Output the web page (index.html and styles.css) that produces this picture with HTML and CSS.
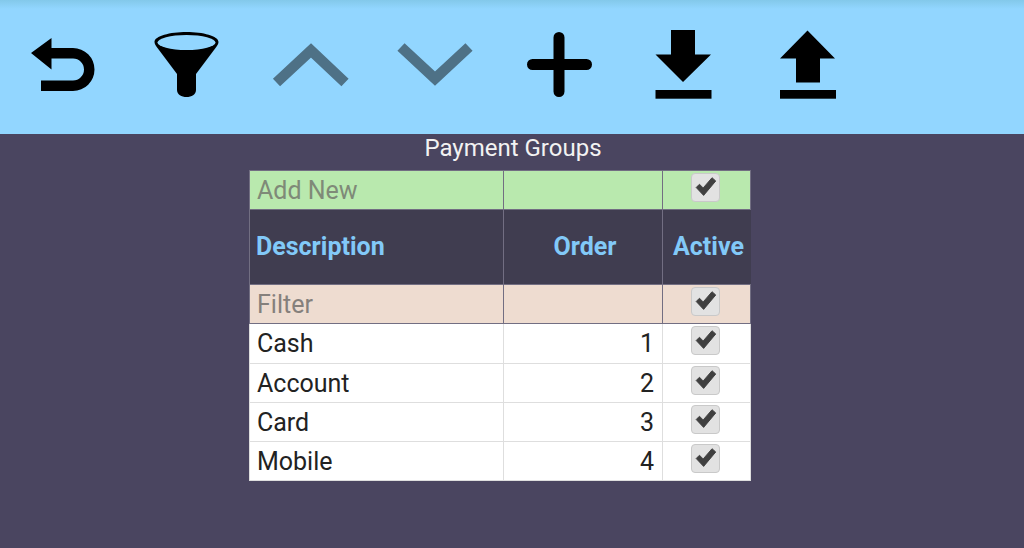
FILE: index.html
```html
<!DOCTYPE html>
<html lang="en">

<head>
    <meta charset="UTF-8">
    <meta name="viewport" content="width=device-width, initial-scale=1.0">
    <title>Payment Groups</title>
    <link rel="stylesheet" href="styles.css">
</head>

<body>
    <svg class="defs" width="0" height="0">
        <symbol id="tick" viewBox="0 0 29 29">
            <path d="M4.5 14.5 L8 11 L12 15 L21.5 4 L25.5 7.5 L12.5 23 Z" />
        </symbol>
    </svg>

    <div class="toolbar">
        <button class="tool">
            <svg viewBox="0 0 124 134" width="124" height="134">
                <path d="M31 53 L51.5 38 V48 H73 A21.5 21.5 0 0 1 73 91 H41 V80.5 H73 A11 11 0 0 0 73 58.5 H51.5 V69.5 Z" />
            </svg>
        </button>
        <button class="tool">
            <svg viewBox="124 0 124 134" width="124" height="134">
                <path d="M154.5 42 C154.5 36 170 32 186.5 32 C203 32 218.5 36 218.5 42 C218.5 44 217 46 215.5 48 L196 74 V90 C196 94.5 191.5 97 186.5 97 C181.5 97 177 94.5 177 90 V74 L157.5 48 C156 46 154.5 44 154.5 42 Z" />
                <ellipse class="hole" cx="186.5" cy="42.5" rx="29" ry="7.5" />
            </svg>
        </button>
        <button class="tool">
            <svg viewBox="248 0 124 134" width="124" height="134">
                <path class="dim" d="M276.5 82.5 L311 50.5 L345 82.5" />
            </svg>
        </button>
        <button class="tool">
            <svg viewBox="372 0 124 134" width="124" height="134">
                <path class="dim" d="M401 47 L435 78.500 L469 47" />
            </svg>
        </button>
        <button class="tool">
            <svg viewBox="496 0 124 134" width="124" height="134">
                <path class="plus" d="M532.500 64.500 H586.500 M559 37.500 V91.500" />
            </svg>
        </button>
        <button class="tool">
            <svg viewBox="620 0 124 134" width="124" height="134">
                <path d="M671 30 H695 V54.500 H711 L683 82 L655.500 54.500 H671 Z" />
                <rect x="655.500" y="90" width="56" height="8.700" />
            </svg>
        </button>
        <button class="tool">
            <svg viewBox="744 0 124 134" width="124" height="134">
                <path d="M807.500 30.500 L835 58.500 H820 V82.500 H796 V58.500 H780 Z" />
                <rect x="780" y="90" width="56" height="8.700" />
            </svg>
        </button>
    </div>

    <h1 class="title">Payment Groups</h1>

    <table class="grid">
        <colgroup>
            <col class="col-desc">
            <col class="col-order">
            <col class="col-active">
        </colgroup>
        <tr class="add-row">
            <td>Add New</td>
            <td></td>
            <td class="active"><span class="check"><svg><use href="#tick" /></svg></span></td>
        </tr>
        <tr class="head-row">
            <th class="left">Description</th>
            <th>Order</th>
            <th>Active</th>
        </tr>
        <tr class="filter-row">
            <td>Filter</td>
            <td></td>
            <td class="active"><span class="check"><svg><use href="#tick" /></svg></span></td>
        </tr>
        <tr class="data-row">
            <td>Cash</td>
            <td class="num">1</td>
            <td class="active"><span class="check"><svg><use href="#tick" /></svg></span></td>
        </tr>
        <tr class="data-row">
            <td>Account</td>
            <td class="num">2</td>
            <td class="active"><span class="check"><svg><use href="#tick" /></svg></span></td>
        </tr>
        <tr class="data-row">
            <td>Card</td>
            <td class="num">3</td>
            <td class="active"><span class="check"><svg><use href="#tick" /></svg></span></td>
        </tr>
        <tr class="data-row">
            <td>Mobile</td>
            <td class="num">4</td>
            <td class="active"><span class="check"><svg><use href="#tick" /></svg></span></td>
        </tr>
    </table>
</body>

</html>
```

FILE: styles.css
```css
body {
    margin: 0;
    height: 548px;
    overflow: hidden;
    background: #4a4560;
    font-family: Roboto, sans-serif;
    font-size: 25px;
    color: #222;
}

.defs {
    position: absolute;
}

.toolbar {
    display: flex;
    height: 134px;
    background: linear-gradient(#83c9ea 0, #92d6ff 9px);
}

.tool {
    width: 124px;
    height: 134px;
    padding: 0;
    border: 0;
    background: transparent;
}

.tool svg {
    display: block;
}

.tool .hole {
    fill: #92d6ff;
}

.tool .dim {
    fill: none;
    stroke: #4e7186;
    stroke-width: 10.500;
}

.tool .plus {
    fill: none;
    stroke: #000;
    stroke-width: 11;
    stroke-linecap: round;
}

.title {
    margin: 0;
    height: 36px;
    padding-left: 2px;
    line-height: 28px;
    font-size: 24px;
    font-weight: normal;
    text-align: center;
    color: #f2f2f2;
}

.grid {
    margin-left: 249px;
    width: 501px;
    table-layout: fixed;
    border-collapse: collapse;
    background: #fff;
}

.col-desc {
    width: 254px;
}

.col-order {
    width: 159px;
}

.col-active {
    width: 88px;
}

.grid td,
.grid th {
    padding: 0 7px;
    border: 1px solid #dedede;
}

.add-row td,
.head-row th,
.filter-row td {
    border-color: #726e82;
}

.add-row td {
    height: 38px;
    background: #b9e9ae;
    color: #7f8a78;
}

.head-row th {
    height: 72px;
    padding: 0 5px 2px 9px;
    white-space: nowrap;
    background: #403d50;
    color: #82c9f8;
    font-weight: bold;
}

.head-row th:last-child {
    border-right-color: #403d50;
}

.head-row .left {
    text-align: left;
    padding-left: 6px;
}

.filter-row td {
    height: 38px;
    background: #eedcd0;
    color: #85807c;
}

.data-row td {
    height: 38px;
}

.filter-row + .data-row td {
    height: 39px;
}

.grid .num {
    text-align: right;
    padding-right: 8px;
}

.grid .active {
    padding: 0;
    text-align: center;
    vertical-align: top;
}

.check {
    display: block;
    box-sizing: border-box;
    width: 29px;
    height: 29px;
    margin: 2px auto 0 28px;
    border: 1px solid #c9c9c9;
    border-radius: 4px;
    background: #e2e2e2;
}

.check svg {
    display: block;
    width: 27px;
    height: 27px;
    fill: #404040;
    stroke: #404040;
    stroke-width: 1;
    stroke-linejoin: round;
}
```
